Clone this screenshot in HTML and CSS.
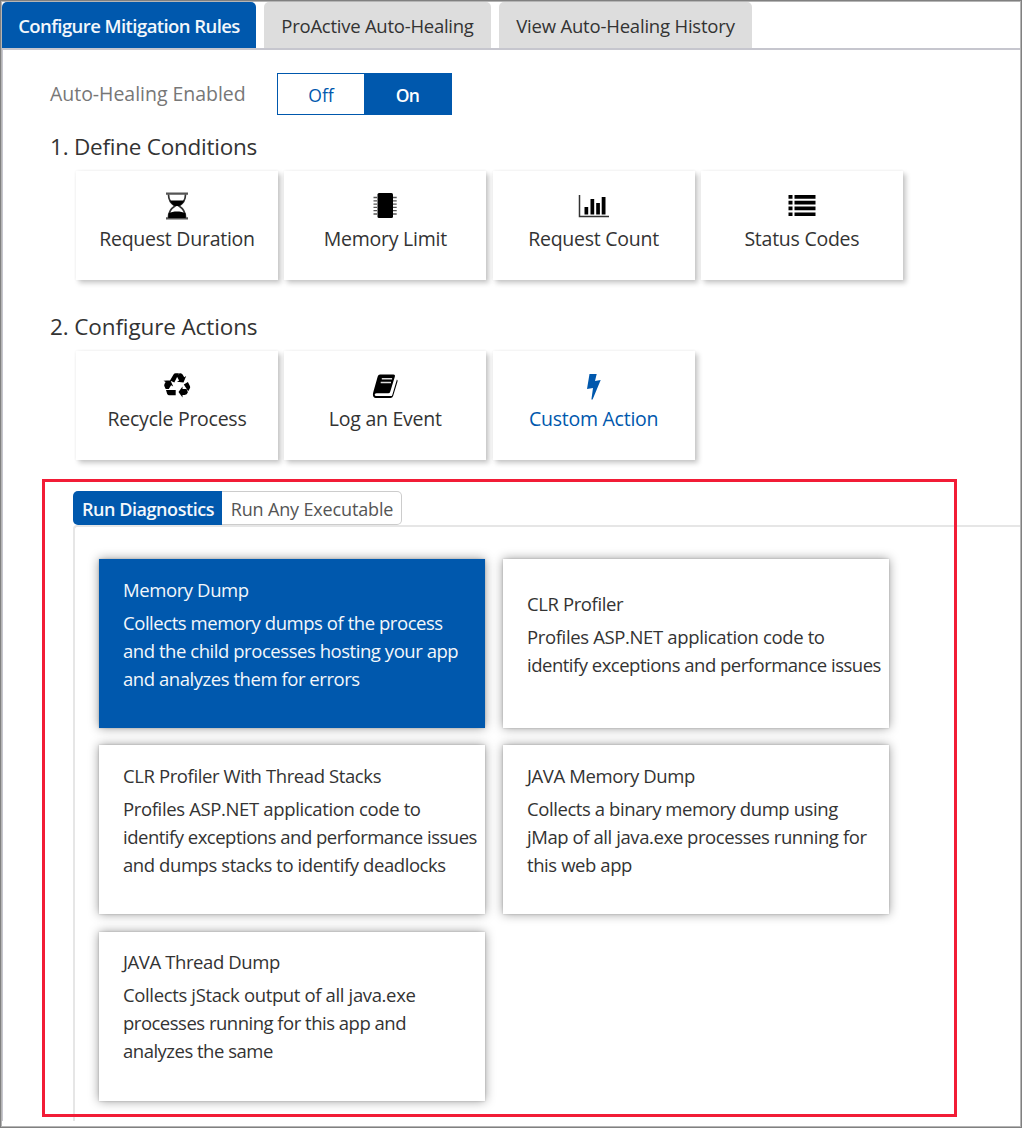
FILE: index.html
```
<!DOCTYPE html>
<html lang="en">
<head>
<meta charset="utf-8">
<title>Auto-Healing</title>
<link rel="stylesheet" href="styles.css">
</head>
<body>
<main class="window">
  <nav class="tabs">
    <div class="tab tab-active">Configure Mitigation Rules</div>
    <div class="tab tab-proactive">ProActive Auto-Healing</div>
    <div class="tab tab-history">View Auto-Healing History</div>
  </nav>
  <div class="page">
    <div class="setting">
      <span class="setting-label">Auto-Healing Enabled</span>
      <div class="toggle"><span class="toggle-off">Off</span><span class="toggle-on">On</span></div>
    </div>

    <h2 class="heading">1. Define Conditions</h2>
    <div class="tiles">
      <div class="tile">
        <svg class="icon" viewBox="0 0 28 28"><path d="M3 0.5h22v2.2H3zM3 25.3h22v2.2H3z" fill="#555"/><path d="M5.5 2.5c0 6 2.5 9 6.500 11.500c-4 2.500-6.500 5.500-6.500 11.500M22.500 2.500c0 6-2.500 9-6.500 11.500c4 2.500 6.500 5.500 6.500 11.500" fill="none" stroke="#333" stroke-width="1.7"/><path d="M6.800 8.500h14.400c-1 2.600-3 4.200-5.200 5.500h-4c-2.200-1.300-4.200-2.900-5.200-5.500zM5.800 21c2-1 5-1.600 8.200-1.600s6.200.6 8.200 1.600l.6 5H5.200z"/></svg>
        <span>Request Duration</span>
      </div>
      <div class="tile">
        <svg class="icon" viewBox="0 0 28 28"><rect x="6.500" y="1" width="15.500" height="25" rx="1.500"/><path d="M2.500 5.500H6M2.500 8.800H6M2.500 12.100H6M2.500 15.400H6M2.500 18.700H6M2.500 22H6M22 5.500h3.700M22 8.800h3.700M22 12.100h3.700M22 15.400h3.700M22 18.700h3.700M22 22h3.700" stroke="#555" stroke-width="1.300"/></svg>
        <span>Memory Limit</span>
      </div>
      <div class="tile">
        <svg class="icon icon-wide" viewBox="0 0 32 28"><path d="M1.500 3v21.500H31" fill="none" stroke="#333" stroke-width="1.500"/><path d="M6.500 15h3.700v7.500H6.500zM12.500 7h3.700v15.500h-3.700zM18.200 11h3.700v11.500h-3.700zM23.700 5h3.800v17.500h-3.800z"/></svg>
        <span>Request Count</span>
      </div>
      <div class="tile">
        <svg class="icon" viewBox="0 0 28 28"><path d="M.5 3h4v3.700h-4zM6.500 3h21v3.700h-21zM.5 8.800h4v3.700h-4zM6.500 8.800h21v3.700h-21zM.5 14.600h4v3.700h-4zM6.500 14.600h21v3.700h-21zM.5 20.400h4v3.700h-4zM6.500 20.400h21v3.700h-21z"/></svg>
        <span>Status Codes</span>
      </div>
    </div>

    <h2 class="heading heading-actions">2. Configure Actions</h2>
    <div class="tiles">
      <div class="tile">
        <svg class="icon" viewBox="0 0 28 28"><path d="M7 8.500l3.500-6q.8-1.200 2.200-1.200h3.300l-4.700 9.300zM16.500 1.300h1q1.500 0 2.300 1.500l1.400 2.400 2-1.100-2.700 6.500-6.500-.9 2.100-1.300-2.200-4zM20.800 12.600l4.100-2.500 2 3.800q.7 1.400-.1 2.700l-1.600 2.600zM24.900 20.300q-.8 2.500-3.300 2.700h-2.100v2.500l-4-5.500 4-5.400v2.500h4zM12.700 18v5.200H6.300q-1.500 0-2.200-1.500L3 18zM2.700 17l-1.200-2.500q-.7-1.300.1-2.700l1-1.800-2.100-1.200 6.900-.6 2.800 6.200-2.100-1.200-2.300 3.800z"/></svg>
        <span>Recycle Process</span>
      </div>
      <div class="tile">
        <svg class="icon" viewBox="0 0 28 28"><path d="M9 2.500h13.500q2 0 1.400 2l-4.700 15.300q-.5 1.500-2 1.500H5.500q-2 0-1.800 1.500t2 1.300h14.100q1.100 0 1.500-1.200l4.600-15.400q1 .7.600 2.100L22.200 23.800q-.7 2.200-2.800 2.200H4.700Q2 25.600 1.900 22.500q0-1.100.5-2.700L6.700 4.500Q7.300 2.500 9 2.500z"/><path d="M10.800 6.800h10.300M9.700 10.500h10.300" stroke="#ddd" stroke-width="1.600"/></svg>
        <span>Log an Event</span>
      </div>
      <div class="tile tile-selected">
        <svg class="icon" viewBox="0 0 28 28"><path d="M9.500 2h7.200l-1.700 7 5.700-1L12.600 27.500h-1.200l1.600-11.500-6 .9z"/></svg>
        <span>Custom Action</span>
      </div>
    </div>

    <section class="diagnostics">
      <div class="pills">
        <div class="pill pill-active">Run Diagnostics</div>
        <div class="pill">Run Any Executable</div>
      </div>
      <div class="panel">
        <article class="card card-selected"><h3>Memory Dump</h3><p>Collects memory dumps of the process<br>and the child processes hosting your app<br>and analyzes them for errors</p></article>
        <article class="card"><h3>CLR Profiler</h3><p><span class="loose">Profiles ASP.NET application code to</span><br><span class="tight">identify exceptions and performance issues</span></p></article>
        <article class="card"><h3>CLR Profiler With Thread Stacks</h3><p><span class="loose">Profiles ASP.NET application code to</span><br><span class="tight">identify exceptions and performance issues</span><br>and dumps stacks to identify deadlocks</p></article>
        <article class="card"><h3>JAVA Memory Dump</h3><p>Collects a binary memory dump using<br>jMap of all java.exe processes running for<br>this web app</p></article>
        <article class="card"><h3>JAVA Thread Dump</h3><p><span class="loose">Collects jStack output of all java.exe</span><br><span class="tight">processes running for this app and</span><br><span class="tight">analyzes the same</span></p></article>
      </div>
    </section>
  </div>
  <div class="highlight"></div>
</main>
</body>
</html>
```
FILE: styles.css
```
* { box-sizing: border-box; }

body {
  margin: 0;
  background: #fff;
  color: #333;
  font-family: "Open Sans", "Noto Sans", sans-serif;
}

.window {
  position: relative;
  display: flex;
  flex-direction: column;
  width: 1022px;
  height: 1128px;
  padding: 1px 1px 6px 1px;
  border: 1px solid #808080;
  box-shadow: inset 0 0 0 1px #b5b5b5;
  overflow: hidden;
}

.tabs {
  display: flex;
  gap: 8px;
  height: 48px;
  flex: none;
  border-bottom: 2px solid #c6c6ce;
}

.tab {
  display: flex;
  align-items: center;
  justify-content: center;
  width: 227px;
  padding-top: 1px;
  border-radius: 5px 5px 0 0;
  background: #ddd;
  font-size: 18.5px;
  white-space: nowrap;
}

.tab-active {
  width: 254px;
  background: #0058ad;
  color: #f3f7fb;
  font-weight: 600;
  letter-spacing: -0.57px;
}

.tab-proactive { letter-spacing: -0.25px; }
.tab-history { width: 253px; letter-spacing: -0.2px; }

.page {
  display: flex;
  flex-direction: column;
  flex: 1;
  padding: 23px 0 0 47px;
  border-left: 1px solid #c6c6ce;
}

.setting {
  display: flex;
  align-items: center;
  height: 42px;
}

.setting-label {
  width: 227px;
  padding-bottom: 1px;
  color: #777;
  font-size: 19.5px;
  letter-spacing: -0.03px;
}

.toggle {
  display: flex;
  width: 175px;
  height: 42px;
  border: 1px solid #0058ad;
  font-size: 17.5px;
}

.toggle-off,
.toggle-on {
  display: flex;
  align-items: center;
  justify-content: center;
  width: 86px;
  padding-top: 1px;
  color: #0058ad;
}

.toggle-on {
  flex: 1;
  background: #0058ad;
  color: #fff;
  font-weight: 600;
  letter-spacing: -0.8px;
}

.heading {
  height: 30px;
  margin: 17px 0 9px;
  font-size: 22.5px;
  font-weight: 400;
  line-height: 30px;
  letter-spacing: -0.24px;
}

.heading-actions {
  margin-top: 32px;
  letter-spacing: -0.12px;
}

.tiles {
  display: flex;
  gap: 6.3px;
  padding-left: 26px;
}

.tile {
  display: flex;
  flex-direction: column;
  align-items: center;
  width: 202px;
  height: 109px;
  padding-top: 21px;
  background: #fff;
  box-shadow: 3px 3px 5px rgba(0, 0, 0, 0.22), 0 0 3px rgba(0, 0, 0, 0.06);
  font-size: 19.5px;
  line-height: 28px;
  letter-spacing: -0.25px;
}

.tile-selected { color: #0058ad; }

.icon {
  width: 28px;
  height: 28px;
  margin-bottom: 5px;
  color: #000;
  fill: currentColor;
}

.icon-wide { width: 32px; }
.tile-selected .icon { color: #0058ad; }

.diagnostics {
  display: flex;
  flex-direction: column;
  flex: 1;
  margin-top: 31px;
  padding-left: 23px;
}

.pills {
  display: flex;
  height: 34px;
}

.pill {
  display: flex;
  align-items: center;
  justify-content: center;
  width: 180px;
  padding: 2px 0 0 1px;
  border: 1px solid #ccc;
  border-left: 0;
  border-radius: 0 5px 5px 0;
  color: #555;
  font-size: 18px;
  letter-spacing: -0.15px;
}

.pill-active {
  width: 149px;
  border: 0;
  border-radius: 5px 0 0 5px;
  background: #0058ad;
  color: #f3f7fb;
  font-weight: 600;
  letter-spacing: -0.43px;
}

.panel {
  display: grid;
  grid-template-columns: 386px 386px;
  grid-auto-rows: 169px;
  gap: 17.4px 18px;
  flex: 1;
  padding: 32px 0 0 24px;
  border-top: 2px solid #e6e6e6;
  border-left: 2px solid #e6e6e6;
  border-top-left-radius: 4px;
}

.card {
  display: flex;
  flex-direction: column;
  justify-content: center;
  padding: 0 0 19px 24px;
  background: #fff;
  box-shadow: 0 0 2px rgba(0, 0, 0, 0.2), 0 0 10px rgba(0, 0, 0, 0.4);
  font-size: 18.5px;
  line-height: 28px;
  letter-spacing: -0.42px;
  white-space: nowrap;
}

.card h3 {
  margin: 0 0 5px;
  font-size: inherit;
  font-weight: inherit;
  letter-spacing: -0.4px;
}

.card p { margin: 0; }
.loose { letter-spacing: -0.36px; }
.tight { letter-spacing: -0.5px; }

.card-selected {
  background: #0058ad;
  color: #f3f7fb;
  font-weight: 500;
  letter-spacing: -0.45px;
}

.highlight {
  position: absolute;
  left: 41px;
  top: 478px;
  width: 915px;
  height: 638px;
  border: 3px solid #f21c36;
}
```
